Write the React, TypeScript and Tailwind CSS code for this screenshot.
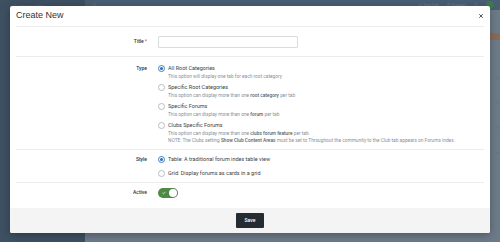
import { Check, X, Search, Bell, Home, HelpCircle, ChevronDown } from "lucide-react";

interface OptionProps {
  label: string;
  checked?: boolean;
  children?: React.ReactNode;
}

const Radio = ({ checked }: { checked?: boolean }) => (
  <span
    className={`mt-[1px] flex h-[7px] w-[7px] shrink-0 items-center justify-center rounded-full border ${
      checked ? "border-[#3b82c4]" : "border-[#b8bdc2]"
    } bg-white`}
  >
    {checked && <span className="h-[3px] w-[3px] rounded-full bg-[#2f6fb3]" />}
  </span>
);

const Option = ({ label, checked, children }: OptionProps) => (
  <div className="flex gap-[3px]">
    <Radio checked={checked} />
    <div className="flex flex-col">
      <span className="text-[5.5px] leading-[9px] text-[#3b3f44]">{label}</span>
      {children && (
        <div className="text-[4.8px] leading-[7px] text-[#8a9096]">{children}</div>
      )}
    </div>
  </div>
);

const Row = ({
  label,
  required,
  className,
  children,
}: {
  label: string;
  required?: boolean;
  className?: string;
  children: React.ReactNode;
}) => (
  <div className={`flex border-b border-[#ececec] ${className ?? ""}`}>
    <div className="w-[132px] shrink-0 pr-[1px] text-right text-[5px] font-medium leading-[9px] text-[#2f3337]">
      {label}
      {required && <span className="ml-[1px] text-[#d23a3a]">*</span>}
    </div>
    <div className="ml-[10px] flex-1">{children}</div>
  </div>
);

export default function App() {
  return (
    <div className="relative h-[242px] w-[500px] overflow-hidden bg-[#6d7b89] font-['Roboto',sans-serif]">
      {/* dimmed admin page behind */}
      <div className="flex h-full flex-col">
        <div className="flex h-[10px] items-center bg-[#4a5f74]">
          <div className="flex h-full w-[85px] items-center bg-[#3d5062] pl-[13px] text-[6px] text-[#56697b]">
            Community
          </div>
          <Search className="ml-[7px] h-[5px] w-[5px] text-[#6c8093]" />
          <div className="ml-auto flex items-center gap-[8px] pr-[6px] text-[4px] text-[#6f8498]">
            <span className="flex items-center gap-[1px]">
              <Home className="h-[4px] w-[4px]" /> Visit Site
            </span>
            <span className="flex items-center gap-[1px]">
              <HelpCircle className="h-[4px] w-[4px]" /> Support
            </span>
            <Bell className="h-[4px] w-[4px]" />
            <span className="h-[8px] w-[8px] rounded-full bg-[#3d7a4f]" />
          </div>
        </div>
        <div className="flex flex-1">
          <div className="w-[85px] bg-[#3d5163]" />
          <div className="flex flex-1 flex-col items-end gap-[21px] pt-[23px] text-[#55626f]">
            <span className="h-[7px] w-[12px] rounded-l-[1px] bg-[#8a6a58]" />
            <ChevronDown className="mt-[15px] h-[4px] w-[4px]" />
            <ChevronDown className="h-[4px] w-[4px]" />
            <ChevronDown className="h-[4px] w-[4px]" />
            <ChevronDown className="h-[4px] w-[4px]" />
          </div>
        </div>
      </div>

      {/* modal */}
      <div className="absolute left-[10px] top-[6px] flex h-[227px] w-[480px] flex-col overflow-hidden rounded-[2px] bg-white shadow-[0_2px_8px_rgba(0,0,0,0.3)]">
        <div className="mx-[6px] flex h-[21px] shrink-0 items-center justify-between border-b border-[#ececec]">
          <span className="font-['Liberation_Sans',sans-serif] text-[9px] font-normal text-[#333]">Create New</span>
          <X className="h-[6px] w-[6px] text-[#222]" strokeWidth={3} />
        </div>

        <div className="mx-[6px] flex flex-1 flex-col">
          <Row label="Title" required className="h-[30px] items-center">
            <div className="h-[12px] w-[140px] rounded-[1px] border border-[#d8dcdf] bg-white" />
          </Row>

          <Row label="Type" className="h-[93px] pt-[7px]">
            <div className="flex flex-col gap-[3px]">
              <Option label="All Root Categories" checked>
                This option will display one tab for each root category
              </Option>
              <Option label="Specific Root Categories">
                This option can display more than one <b className="font-medium text-[#5a5f64]">root category</b> per tab
              </Option>
              <Option label="Specific Forums">
                This option can display more than one <b className="font-medium text-[#5a5f64]">forum</b> per tab
              </Option>
              <Option label="Clubs Specific Forums">
                <div>
                  This option can display more than one{" "}
                  <b className="font-medium text-[#5a5f64]">clubs forum feature</b> per tab.
                </div>
                <div>
                  NOTE: The Clubs setting <b className="font-medium text-[#5a5f64]">Show Club Content Areas</b> must be set to
                  Throughout the community to the Club tab appears on Forums index.
                </div>
              </Option>
            </div>
          </Row>

          <Row label="Style" className="h-[33px] pt-[5px]">
            <div className="flex flex-col gap-[5px]">
              <Option label="Table: A traditional forum index table view" checked />
              <Option label="Grid: Display forums as cards in a grid" />
            </div>
          </Row>

          <div className="flex h-[20px] items-center">
            <div className="w-[132px] shrink-0 pr-[1px] text-right text-[5px] font-medium text-[#2f3337]">
              Active
            </div>
            <div className="ml-[10px] flex h-[10px] w-[20px] items-center justify-between rounded-full bg-[#4f8a45] pl-[4px] pr-[1px]">
              <Check className="h-[4px] w-[4px] text-white" strokeWidth={4} />
              <span className="h-[8px] w-[8px] rounded-full bg-white" />
            </div>
          </div>
        </div>

        <div className="flex h-[25px] shrink-0 items-center justify-center bg-[#f4f4f4]">
          <button className="h-[15px] w-[28px] rounded-[1px] bg-[#252c31] text-[5px] font-medium text-white">
            Save
          </button>
        </div>
      </div>
    </div>
  );
}
